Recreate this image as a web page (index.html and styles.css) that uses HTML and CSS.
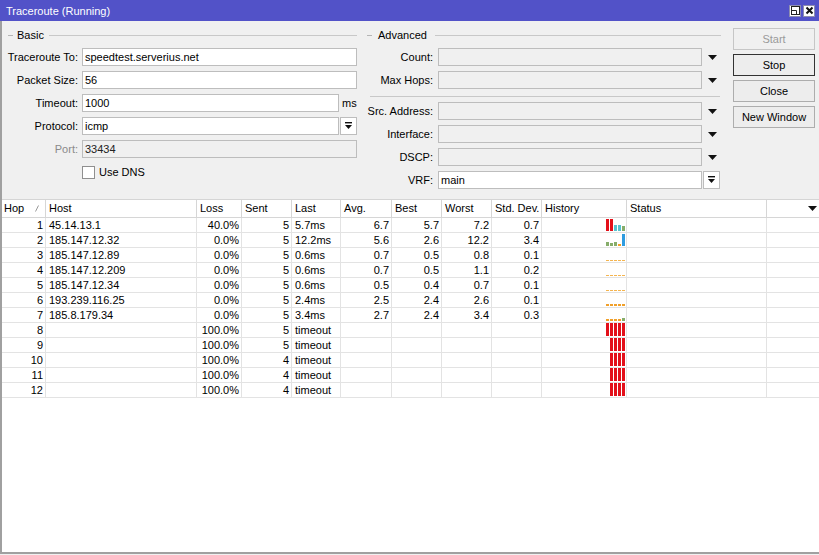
FILE: index.html
```html
<!DOCTYPE html>
<html>
<head>
<meta charset="utf-8">
<link rel="stylesheet" href="styles.css">
</head>
<body>
<div class="win">
  <div class="titlebar">
    <span class="title">Traceroute (Running)</span>
    <div class="tb-btns">
      <span class="tb-btn"><svg width="9" height="9" viewBox="0 0 9 9"><rect x="0.5" y="0.5" width="8" height="8" fill="none" stroke="#222" stroke-width="1"/><path d="M0.5 4.5H5.5V8.5" fill="none" stroke="#222" stroke-width="1"/></svg></span>
      <span class="tb-btn"><svg width="9" height="9" viewBox="0 0 9 9"><path d="M1.5 1.5L7.5 7.5M7.5 1.5L1.5 7.5" stroke="#111" stroke-width="2"/></svg></span>
    </div>
  </div>
  <div class="body">
    <div class="top">
      <section class="group basic">
        <div class="group-head"><span class="dash"></span><span class="gtitle">Basic</span><span class="gline"></span></div>
        <div class="rows">
          <div class="row"><label class="lbl">Traceroute To:</label><div class="input w-full">speedtest.serverius.net</div></div>
          <div class="row"><label class="lbl">Packet Size:</label><div class="input w-full">56</div></div>
          <div class="row"><label class="lbl">Timeout:</label><div class="input w-short">1000</div><span class="unit">ms</span></div>
          <div class="row"><label class="lbl">Protocol:</label><div class="input w-short">icmp</div><span class="ddbtn"><svg width="9" height="8" viewBox="0 0 9 8"><rect x="1" y="0" width="7" height="1.4" fill="#111"/><path d="M1 3H8L4.5 7Z" fill="#111"/></svg></span></div>
          <div class="row"><label class="lbl disabled">Port:</label><div class="input w-full off">33434</div></div>
          <div class="row"><span class="check"></span><span class="check-lbl">Use DNS</span></div>
        </div>
      </section>
      <section class="group adv">
        <div class="group-head"><span class="dash"></span><span class="gtitle adv-title">Advanced</span><span class="gline"></span></div>
        <div class="rows">
          <div class="row"><label class="lbl">Count:</label><div class="input w-adv off"></div><span class="arrow"><svg width="9" height="5" viewBox="0 0 9 5"><path d="M0 0H9L4.5 5Z" fill="#111"/></svg></span></div>
          <div class="row"><label class="lbl">Max Hops:</label><div class="input w-adv off"></div><span class="arrow"><svg width="9" height="5" viewBox="0 0 9 5"><path d="M0 0H9L4.5 5Z" fill="#111"/></svg></span></div>
          <div class="sep"></div>
          <div class="row"><label class="lbl">Src. Address:</label><div class="input w-adv off"></div><span class="arrow"><svg width="9" height="5" viewBox="0 0 9 5"><path d="M0 0H9L4.5 5Z" fill="#111"/></svg></span></div>
          <div class="row"><label class="lbl">Interface:</label><div class="input w-adv off"></div><span class="arrow"><svg width="9" height="5" viewBox="0 0 9 5"><path d="M0 0H9L4.5 5Z" fill="#111"/></svg></span></div>
          <div class="row"><label class="lbl">DSCP:</label><div class="input w-adv off"></div><span class="arrow"><svg width="9" height="5" viewBox="0 0 9 5"><path d="M0 0H9L4.5 5Z" fill="#111"/></svg></span></div>
          <div class="row"><label class="lbl">VRF:</label><div class="input w-adv">main</div><span class="ddbtn"><svg width="9" height="8" viewBox="0 0 9 8"><rect x="1" y="0" width="7" height="1.4" fill="#111"/><path d="M1 3H8L4.5 7Z" fill="#111"/></svg></span></div>
        </div>
      </section>
      <div class="buttons">
        <button class="btn off">Start</button>
        <button class="btn focus">Stop</button>
        <button class="btn">Close</button>
        <button class="btn">New Window</button>
      </div>
    </div>
    <div class="table">
      <div class="tr head">
        <div class="th">Hop<svg class="sort" width="4" height="7" viewBox="0 0 4 7"><path d="M0.5 6.5L3.5 0.5" stroke="#999" stroke-width="1"/></svg></div>
        <div class="th">Host</div>
        <div class="th">Loss</div>
        <div class="th">Sent</div>
        <div class="th">Last</div>
        <div class="th">Avg.</div>
        <div class="th">Best</div>
        <div class="th">Worst</div>
        <div class="th">Std. Dev.</div>
        <div class="th">History</div>
        <div class="th">Status</div>
        <div class="th last"><svg width="9" height="5" viewBox="0 0 9 5"><path d="M0 0H9L4.5 5Z" fill="#111"/></svg></div>
      </div>

      <div class="tr">
        <div class="td r">1</div><div class="td">45.14.13.1</div><div class="td r">40.0%</div><div class="td r">5</div><div class="td">5.7ms</div><div class="td r">6.7</div><div class="td r">5.7</div><div class="td r">7.2</div><div class="td r">0.7</div>
        <div class="td hist"><i class="bar red" style="height:12px"></i><i class="bar red" style="height:12px"></i><i class="bar cyan" style="height:6px"></i><i class="bar cyan" style="height:6px"></i><i class="bar green" style="height:5px"></i></div>
        <div class="td"></div><div class="td end"></div>
      </div>
      <div class="tr">
        <div class="td r">2</div><div class="td">185.147.12.32</div><div class="td r">0.0%</div><div class="td r">5</div><div class="td">12.2ms</div><div class="td r">5.6</div><div class="td r">2.6</div><div class="td r">12.2</div><div class="td r">3.4</div>
        <div class="td hist"><i class="bar green" style="height:4px"></i><i class="bar green" style="height:3px"></i><i class="bar green" style="height:4px"></i><i class="bar orange" style="height:2px"></i><i class="bar blue" style="height:12px"></i></div>
        <div class="td"></div><div class="td end"></div>
      </div>
      <div class="tr">
        <div class="td r">3</div><div class="td">185.147.12.89</div><div class="td r">0.0%</div><div class="td r">5</div><div class="td">0.6ms</div><div class="td r">0.7</div><div class="td r">0.5</div><div class="td r">0.8</div><div class="td r">0.1</div>
        <div class="td hist"><i class="bar lorange" style="height:1px"></i><i class="bar lorange" style="height:1px"></i><i class="bar lorange" style="height:1px"></i><i class="bar lorange" style="height:1px"></i><i class="bar lorange" style="height:1px"></i></div>
        <div class="td"></div><div class="td end"></div>
      </div>
      <div class="tr">
        <div class="td r">4</div><div class="td">185.147.12.209</div><div class="td r">0.0%</div><div class="td r">5</div><div class="td">0.6ms</div><div class="td r">0.7</div><div class="td r">0.5</div><div class="td r">1.1</div><div class="td r">0.2</div>
        <div class="td hist"><i class="bar lorange" style="height:1px"></i><i class="bar lorange" style="height:1px"></i><i class="bar lorange" style="height:1px"></i><i class="bar lorange" style="height:1px"></i><i class="bar lorange" style="height:1px"></i></div>
        <div class="td"></div><div class="td end"></div>
      </div>
      <div class="tr">
        <div class="td r">5</div><div class="td">185.147.12.34</div><div class="td r">0.0%</div><div class="td r">5</div><div class="td">0.6ms</div><div class="td r">0.5</div><div class="td r">0.4</div><div class="td r">0.7</div><div class="td r">0.1</div>
        <div class="td hist"><i class="bar lorange" style="height:1px"></i><i class="bar lorange" style="height:1px"></i><i class="bar lorange" style="height:1px"></i><i class="bar lorange" style="height:1px"></i><i class="bar lorange" style="height:1px"></i></div>
        <div class="td"></div><div class="td end"></div>
      </div>
      <div class="tr">
        <div class="td r">6</div><div class="td">193.239.116.25</div><div class="td r">0.0%</div><div class="td r">5</div><div class="td">2.4ms</div><div class="td r">2.5</div><div class="td r">2.4</div><div class="td r">2.6</div><div class="td r">0.1</div>
        <div class="td hist"><i class="bar orange" style="height:2px"></i><i class="bar orange" style="height:2px"></i><i class="bar orange" style="height:2px"></i><i class="bar orange" style="height:2px"></i><i class="bar orange" style="height:2px"></i></div>
        <div class="td"></div><div class="td end"></div>
      </div>
      <div class="tr">
        <div class="td r">7</div><div class="td">185.8.179.34</div><div class="td r">0.0%</div><div class="td r">5</div><div class="td">3.4ms</div><div class="td r">2.7</div><div class="td r">2.4</div><div class="td r">3.4</div><div class="td r">0.3</div>
        <div class="td hist"><i class="bar orange" style="height:2px"></i><i class="bar orange" style="height:2px"></i><i class="bar orange" style="height:2px"></i><i class="bar orange" style="height:2px"></i><i class="bar green" style="height:3px"></i></div>
        <div class="td"></div><div class="td end"></div>
      </div>
      <div class="tr">
        <div class="td r">8</div><div class="td"></div><div class="td r">100.0%</div><div class="td r">5</div><div class="td">timeout</div><div class="td"></div><div class="td"></div><div class="td"></div><div class="td"></div>
        <div class="td hist"><i class="bar red full"></i><i class="bar red full"></i><i class="bar red full"></i><i class="bar red full"></i><i class="bar red full"></i></div>
        <div class="td"></div><div class="td end"></div>
      </div>
      <div class="tr">
        <div class="td r">9</div><div class="td"></div><div class="td r">100.0%</div><div class="td r">5</div><div class="td">timeout</div><div class="td"></div><div class="td"></div><div class="td"></div><div class="td"></div>
        <div class="td hist"><i class="bar red full"></i><i class="bar red full"></i><i class="bar red full"></i><i class="bar red full"></i></div>
        <div class="td"></div><div class="td end"></div>
      </div>
      <div class="tr">
        <div class="td r">10</div><div class="td"></div><div class="td r">100.0%</div><div class="td r">4</div><div class="td">timeout</div><div class="td"></div><div class="td"></div><div class="td"></div><div class="td"></div>
        <div class="td hist"><i class="bar red full"></i><i class="bar red full"></i><i class="bar red full"></i><i class="bar red full"></i></div>
        <div class="td"></div><div class="td end"></div>
      </div>
      <div class="tr">
        <div class="td r">11</div><div class="td"></div><div class="td r">100.0%</div><div class="td r">4</div><div class="td">timeout</div><div class="td"></div><div class="td"></div><div class="td"></div><div class="td"></div>
        <div class="td hist"><i class="bar red full"></i><i class="bar red full"></i><i class="bar red full"></i><i class="bar red full"></i></div>
        <div class="td"></div><div class="td end"></div>
      </div>
      <div class="tr">
        <div class="td r">12</div><div class="td"></div><div class="td r">100.0%</div><div class="td r">4</div><div class="td">timeout</div><div class="td"></div><div class="td"></div><div class="td"></div><div class="td"></div>
        <div class="td hist"><i class="bar red full"></i><i class="bar red full"></i><i class="bar red full"></i><i class="bar red full"></i></div>
        <div class="td"></div><div class="td end"></div>
      </div>
    </div>
  </div>
</div>
</body>
</html>
```
FILE: styles.css
```css
* { box-sizing: border-box; }
html, body { margin: 0; padding: 0; }
body {
  font-family: "Liberation Sans", Arial, sans-serif;
  font-size: 11px;
  color: #000;
  background: #f0f0f0;
}
.win {
  width: 819px;
  height: 555px;
  display: flex;
  flex-direction: column;
  overflow: hidden;
}
.titlebar {
  height: 21px;
  flex: none;
  background: #5252c8;
  color: #fff;
  display: flex;
  align-items: center;
  padding-left: 6px;
}
.title { flex: 1; font-size: 11px; }
.tb-btns { display: flex; gap: 2px; margin-right: 4px; }
.tb-btn {
  width: 12px;
  height: 12px;
  background: #fff;
  border: 1px solid #8d8db0;
  display: flex;
  align-items: center;
  justify-content: center;
}
.body {
  flex: none;
  height: 533px;
  border-left: 2px solid #a0a0a0;
  border-bottom: 2px solid #a0a0a0;
  display: flex;
  flex-direction: column;
}
.top { height: 178px; flex: none; display: flex; }
.group { padding-top: 7px; }
.basic { width: 355px; }
.adv { width: 360px; margin-left: 5px; }
.group-head {
  height: 14px;
  display: flex;
  align-items: center;
  padding-left: 6px;
  margin-bottom: 6px;
}
.adv .group-head { padding-left: 5px; padding-right: 1px; }
.dash { width: 5px; height: 1px; background: #b5b5b5; }
.gtitle { margin-left: 4px; margin-right: 5px; }
.adv-title { margin-left: 6px; margin-right: 8px; }
.gline { flex: 1; height: 1px; background: #c8c8c8; }
.rows { display: flex; flex-direction: column; gap: 5px; }
.row { display: flex; align-items: center; height: 18px; }
.lbl { white-space: nowrap; text-align: right; }
.basic .lbl { width: 76px; margin-right: 4px; }
.adv .lbl { width: 71px; margin-right: 5px; }
.lbl.disabled { color: #8a8a8a; }
.input {
  height: 18px;
  border: 1px solid #bdbdbd;
  background: #fff;
  padding-left: 2px;
  line-height: 16px;
  white-space: nowrap;
  overflow: hidden;
}
.input.off { background: #f0f0f0; color: #222; }
.w-full { width: 275px; }
.w-short { width: 257px; }
.w-adv { width: 264px; }
.unit { margin-left: 3px; }
.ddbtn {
  width: 17px;
  height: 18px;
  margin-left: 1px;
  border: 1px solid #bdbdbd;
  background: #fff;
  display: flex;
  align-items: center;
  justify-content: center;
}
.arrow {
  width: 18px;
  height: 18px;
  display: flex;
  align-items: center;
  padding-left: 6px;
}
.sep { height: 1px; background: #c8c8c8; margin: 2px 2px 0 8px; }
.check {
  width: 13px;
  height: 13px;
  margin-left: 80px;
  border: 1px solid #8f8f8f;
  background: #fff;
}
.check-lbl { margin-left: 4px; }
.buttons {
  margin-left: 11px;
  width: 82px;
  padding-top: 7px;
  display: flex;
  flex-direction: column;
  gap: 4px;
}
.btn {
  height: 22px;
  width: 82px;
  padding: 0;
  font: inherit;
  color: #000;
  background: #ededed;
  border: 1px solid #adadad;
}
.btn.off { color: #9a9a9a; border-color: #c6c6c6; background: #f0f0f0; }
.btn.focus { border-color: #333; }
.table {
  flex: 1;
  background: #fff;
  border-top: 1px solid #d5d5d5;
}
.tr {
  display: grid;
  grid-template-columns: 44px 151px 45px 50px 49px 51px 50px 50px 50px 85px 140px 1fr;
  height: 15px;
}
.tr.head { height: 18px; }
.th {
  position: relative;
  border-right: 1px solid #d6d6d6;
  border-bottom: 1px solid #d6d6d6;
  padding-left: 3px;
  line-height: 17px;
  white-space: nowrap;
}
.th:first-child { padding-left: 2px; }
.th.last {
  border-right: none;
  display: flex;
  align-items: center;
  justify-content: flex-end;
  padding-right: 2px;
}
.sort { position: absolute; left: 33px; top: 5px; }
.td {
  border-right: 1px solid #e3e3e3;
  border-bottom: 1px solid #e3e3e3;
  padding: 0 2px 0 3px;
  line-height: 14px;
  white-space: nowrap;
  overflow: hidden;
}
.td.r { text-align: right; }
.td.end { border-right: none; }
.hist {
  display: flex;
  justify-content: flex-end;
  align-items: flex-end;
  gap: 1px;
  padding: 0 1px 1px 0;
}
.bar { display: block; width: 3px; }
.bar.full { height: 13px; }
.red { background: #e3101a; }
.cyan { background: #58c3cf; }
.green { background: #86ad6a; }
.orange { background: #f1a02a; }
.lorange { background: #f5b550; }
.blue { background: #2e9ce0; }
```
